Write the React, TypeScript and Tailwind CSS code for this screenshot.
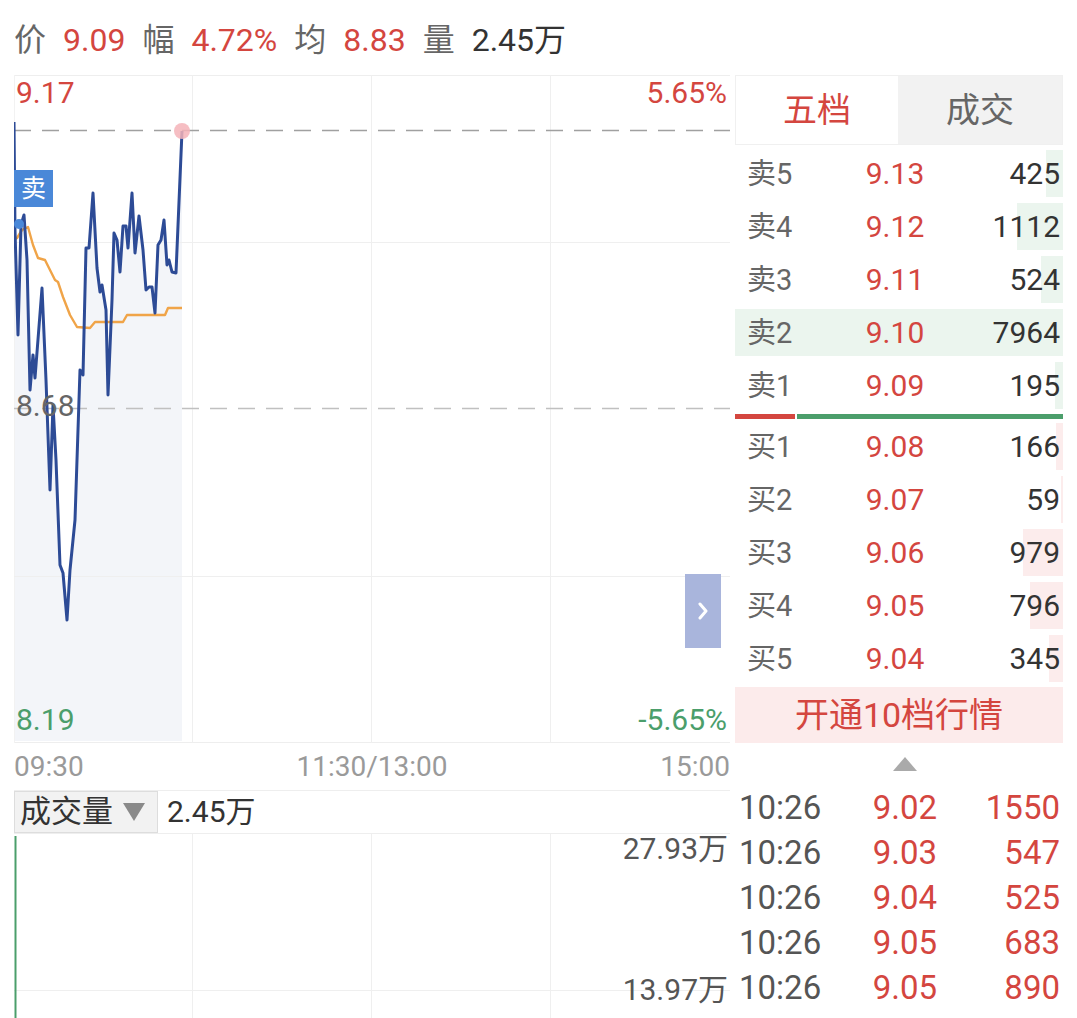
import React from "react";

const pricePts: [number, number][] = [
  [14, 122], [15, 230], [18, 335], [21, 225], [24, 215], [27, 260], [30, 390], [33, 355], [35, 378],
  [42, 288], [46, 380], [50, 490], [53, 405], [56, 460], [60, 565], [63, 573], [67, 620], [70, 570],
  [75, 520], [80, 370], [83, 375], [86, 248], [89, 248], [93, 193], [97, 268], [100, 292], [102, 285],
  [106, 310], [108, 395], [112, 300], [114, 233], [117, 240], [120, 272], [123, 226], [126, 226],
  [128, 248], [132, 193], [135, 253], [139, 216], [143, 250], [146, 290], [149, 287], [152, 287],
  [155, 313], [158, 245], [161, 240], [164, 220], [167, 265], [169, 260], [172, 272], [176, 273],
  [182, 131],
];

const avgPts: [number, number][] = [
  [14, 240], [17, 238], [22, 230], [28, 227], [33, 245], [38, 258], [45, 260], [50, 270], [55, 280],
  [58, 282], [63, 297], [70, 315], [77, 327], [90, 328], [95, 322], [123, 322], [127, 315], [165, 315],
  [168, 308], [182, 308],
];

const rel = (p: [number, number][]) => p.map(([x, y]) => `${x - 14},${y - 75}`).join(" ");

const sells = [
  { l: "卖5", p: "9.13", v: 425 },
  { l: "卖4", p: "9.12", v: 1112 },
  { l: "卖3", p: "9.11", v: 524 },
  { l: "卖2", p: "9.10", v: 7964 },
  { l: "卖1", p: "9.09", v: 195 },
];
const buys = [
  { l: "买1", p: "9.08", v: 166 },
  { l: "买2", p: "9.07", v: 59 },
  { l: "买3", p: "9.06", v: 979 },
  { l: "买4", p: "9.05", v: 796 },
  { l: "买5", p: "9.04", v: 345 },
];
const trades = [
  { t: "10:26", p: "9.02", v: "1550" },
  { t: "10:26", p: "9.03", v: "547" },
  { t: "10:26", p: "9.04", v: "525" },
  { t: "10:26", p: "9.05", v: "683" },
  { t: "10:26", p: "9.05", v: "890" },
];

function BookRow({ l, p, v, sell }: { l: string; p: string; v: number; sell: boolean }) {
  const w = (v / 7964) * 328;
  return (
    <div className="relative flex h-[53px] items-center pl-[12px] pr-[3px]">
      <div
        className={`absolute right-0 top-[3px] bottom-[3px] ${sell ? "bg-[#ebf5ee]" : "bg-[#fcecec]"}`}
        style={{ width: w }}
      />
      <span className="relative w-[88px] text-[29px] leading-[30px] text-[#666]">{l}</span>
      <span className="relative w-[120px] text-center text-[30px] leading-[30px] text-[#d4463f]">{p}</span>
      <span className="relative flex-1 text-right text-[30px] leading-[30px] text-[#333]">{v}</span>
    </div>
  );
}

export default function App() {
  return (
    <div
      className="h-[1018px] w-[1077px] overflow-hidden bg-white"
      style={{ fontFamily: 'Roboto, "Noto Sans CJK SC", sans-serif' }}
    >
      {/* header */}
      <div className="flex h-[75px] items-center gap-[17px] px-[14px] pt-[5px] text-[32px] leading-[36px]">
        <span className="text-[#666]">价</span>
        <span className="text-[#d4463f]">9.09</span>
        <span className="text-[#666]">幅</span>
        <span className="text-[#d4463f]">4.72%</span>
        <span className="text-[#666]">均</span>
        <span className="text-[#d4463f]">8.83</span>
        <span className="text-[#666]">量</span>
        <span className="text-[#333]">2.45万</span>
      </div>

      <div className="flex gap-[5px] px-[14px]">
        {/* left column */}
        <div className="flex w-[716px] flex-col">
          {/* price chart */}
          <div className="relative h-[668px]">
            <svg className="absolute inset-0" width={716} height={668} viewBox="0 0 716 668">
              <polygon points={`${rel(pricePts)} 168,666 0,666`} fill="#f3f5f9" />
              <line x1="0" y1="0.5" x2="716" y2="0.5" stroke="#eeeeee" />
              <line x1="0" y1="667.5" x2="716" y2="667.5" stroke="#eeeeee" />
              <line x1="0.5" y1="0" x2="0.5" y2="668" stroke="#f2f2f2" />
              <line x1="178.5" y1="0" x2="178.5" y2="668" stroke="#efefef" />
              <line x1="357.5" y1="0" x2="357.5" y2="668" stroke="#efefef" />
              <line x1="536.5" y1="0" x2="536.5" y2="668" stroke="#efefef" />
              <line x1="0" y1="167.5" x2="716" y2="167.5" stroke="#efefef" />
              <line x1="0" y1="501.5" x2="716" y2="501.5" stroke="#efefef" />
              <line x1="0" y1="55.5" x2="716" y2="55.5" stroke="#a0a0a0" strokeWidth="1.6" strokeDasharray="17 11" />
              <line x1="0" y1="333.5" x2="716" y2="333.5" stroke="#c0c0c0" strokeWidth="1.6" strokeDasharray="17 11" />
              <polyline points={rel(avgPts)} fill="none" stroke="#f0a448" strokeWidth="2.4" strokeLinejoin="round" />
              <polyline points={rel(pricePts)} fill="none" stroke="#2d4b96" strokeWidth="3" strokeLinejoin="round" />
              <circle cx="168" cy="56" r="8" fill="#f4b3b8" opacity="0.85" />
              <circle cx="5" cy="149" r="5" fill="#4a88d8" />
            </svg>
            <span className="absolute left-[2px] top-[3px] text-[30px] leading-[30px] text-[#d4463f]">9.17</span>
            <span className="absolute right-[3px] top-[3px] text-[30px] leading-[30px] text-[#d4463f]">5.65%</span>
            <span className="absolute left-[2px] top-[316px] text-[30px] leading-[30px] text-[#666]">8.68</span>
            <span className="absolute left-[2px] top-[630px] text-[30px] leading-[30px] text-[#4b9e6b]">8.19</span>
            <span className="absolute right-[3px] top-[630px] text-[30px] leading-[30px] text-[#4b9e6b]">-5.65%</span>
            <div className="absolute left-0 top-[95px] flex h-[37px] w-[39px] items-center justify-center bg-[#4a88d8] text-[25px] leading-none text-white">
              卖
            </div>
            <div className="absolute left-[671px] top-[499px] flex h-[74px] w-[36px] items-center justify-center bg-[#a9b5dc]">
              <svg width="10" height="18" viewBox="0 0 10 18">
                <polyline points="2,2 8,9 2,16" fill="none" stroke="white" strokeWidth="3" strokeLinecap="round" strokeLinejoin="round" />
              </svg>
            </div>
          </div>

          {/* time axis */}
          <div className="grid h-[47px] grid-cols-3 items-center text-[28px] leading-[30px] text-[#9a9a9a]">
            <span className="text-left">09:30</span>
            <span className="text-center">11:30/13:00</span>
            <span className="text-right">15:00</span>
          </div>

          {/* volume header */}
          <div className="flex h-[44px] items-stretch border-y border-[#eeeeee]">
            <div className="flex w-[144px] items-center gap-[10px] border border-[#dddddd] bg-[#f2f2f2] pl-[5px]">
              <span className="text-[31px] leading-[32px] text-[#333]">成交量</span>
              <svg width="22" height="18" viewBox="0 0 22 18">
                <polygon points="0,0 22,0 11,18" fill="#8a8a8a" />
              </svg>
            </div>
            <span className="ml-[9px] self-center text-[30px] leading-[32px] text-[#333]">2.45万</span>
          </div>

          {/* volume chart */}
          <div className="relative flex-1">
            <svg className="absolute inset-0" width={716} height={184} viewBox="0 0 716 184">
              <line x1="178.5" y1="0" x2="178.5" y2="184" stroke="#efefef" />
              <line x1="357.5" y1="0" x2="357.5" y2="184" stroke="#efefef" />
              <line x1="536.5" y1="0" x2="536.5" y2="184" stroke="#efefef" />
              <line x1="0" y1="156.5" x2="716" y2="156.5" stroke="#efefef" />
              <line x1="1.5" y1="2" x2="1.5" y2="184" stroke="#4b9e6b" strokeWidth="2" />
            </svg>
            <span className="absolute right-[2px] top-0 text-[30px] leading-[30px] text-[#555]">27.93万</span>
            <span className="absolute right-[2px] top-[141px] text-[30px] leading-[30px] text-[#555]">13.97万</span>
          </div>
        </div>

        {/* right column */}
        <div className="flex w-[328px] flex-col">
          <div className="flex h-[70px] border border-[#f0f0f0]">
            <div className="flex w-[162px] items-center justify-center text-[34px] leading-none text-[#d4463f]">五档</div>
            <div className="flex flex-1 items-center justify-center bg-[#f2f2f2] text-[34px] leading-none text-[#666]">成交</div>
          </div>
          <div className="h-[2px]" />
          {sells.map((r) => (
            <BookRow key={r.l} l={r.l} p={r.p} v={r.v} sell />
          ))}
          <div className="flex h-[8px] items-center gap-[2px]">
            <div className="h-[5px] w-[60px] bg-[#d4463f]" />
            <div className="h-[5px] flex-1 bg-[#4b9e6b]" />
          </div>
          {buys.map((r) => (
            <BookRow key={r.l} l={r.l} p={r.p} v={r.v} sell={false} />
          ))}
          <div className="h-[2px]" />
          <div className="flex h-[56px] items-center justify-center bg-[#fcebeb] text-[34px] leading-none text-[#d4463f]">
            开通10档行情
          </div>
          <div className="flex h-[42px] items-center justify-center pl-[12px]">
            <svg width="24" height="14" viewBox="0 0 24 14">
              <polygon points="12,0 24,14 0,14" fill="#aaaaaa" />
            </svg>
          </div>
          {trades.map((r, i) => (
            <div key={i} className="flex h-[45px] items-center pl-[4px] pr-[3px]">
              <span className="w-[106px] text-[33px] leading-[34px] text-[#555]">{r.t}</span>
              <span className="w-[120px] text-center text-[33px] leading-[34px] text-[#d4463f]">{r.p}</span>
              <span className="flex-1 text-right text-[33px] leading-[34px] text-[#d4463f]">{r.v}</span>
            </div>
          ))}
        </div>
      </div>
    </div>
  );
}
